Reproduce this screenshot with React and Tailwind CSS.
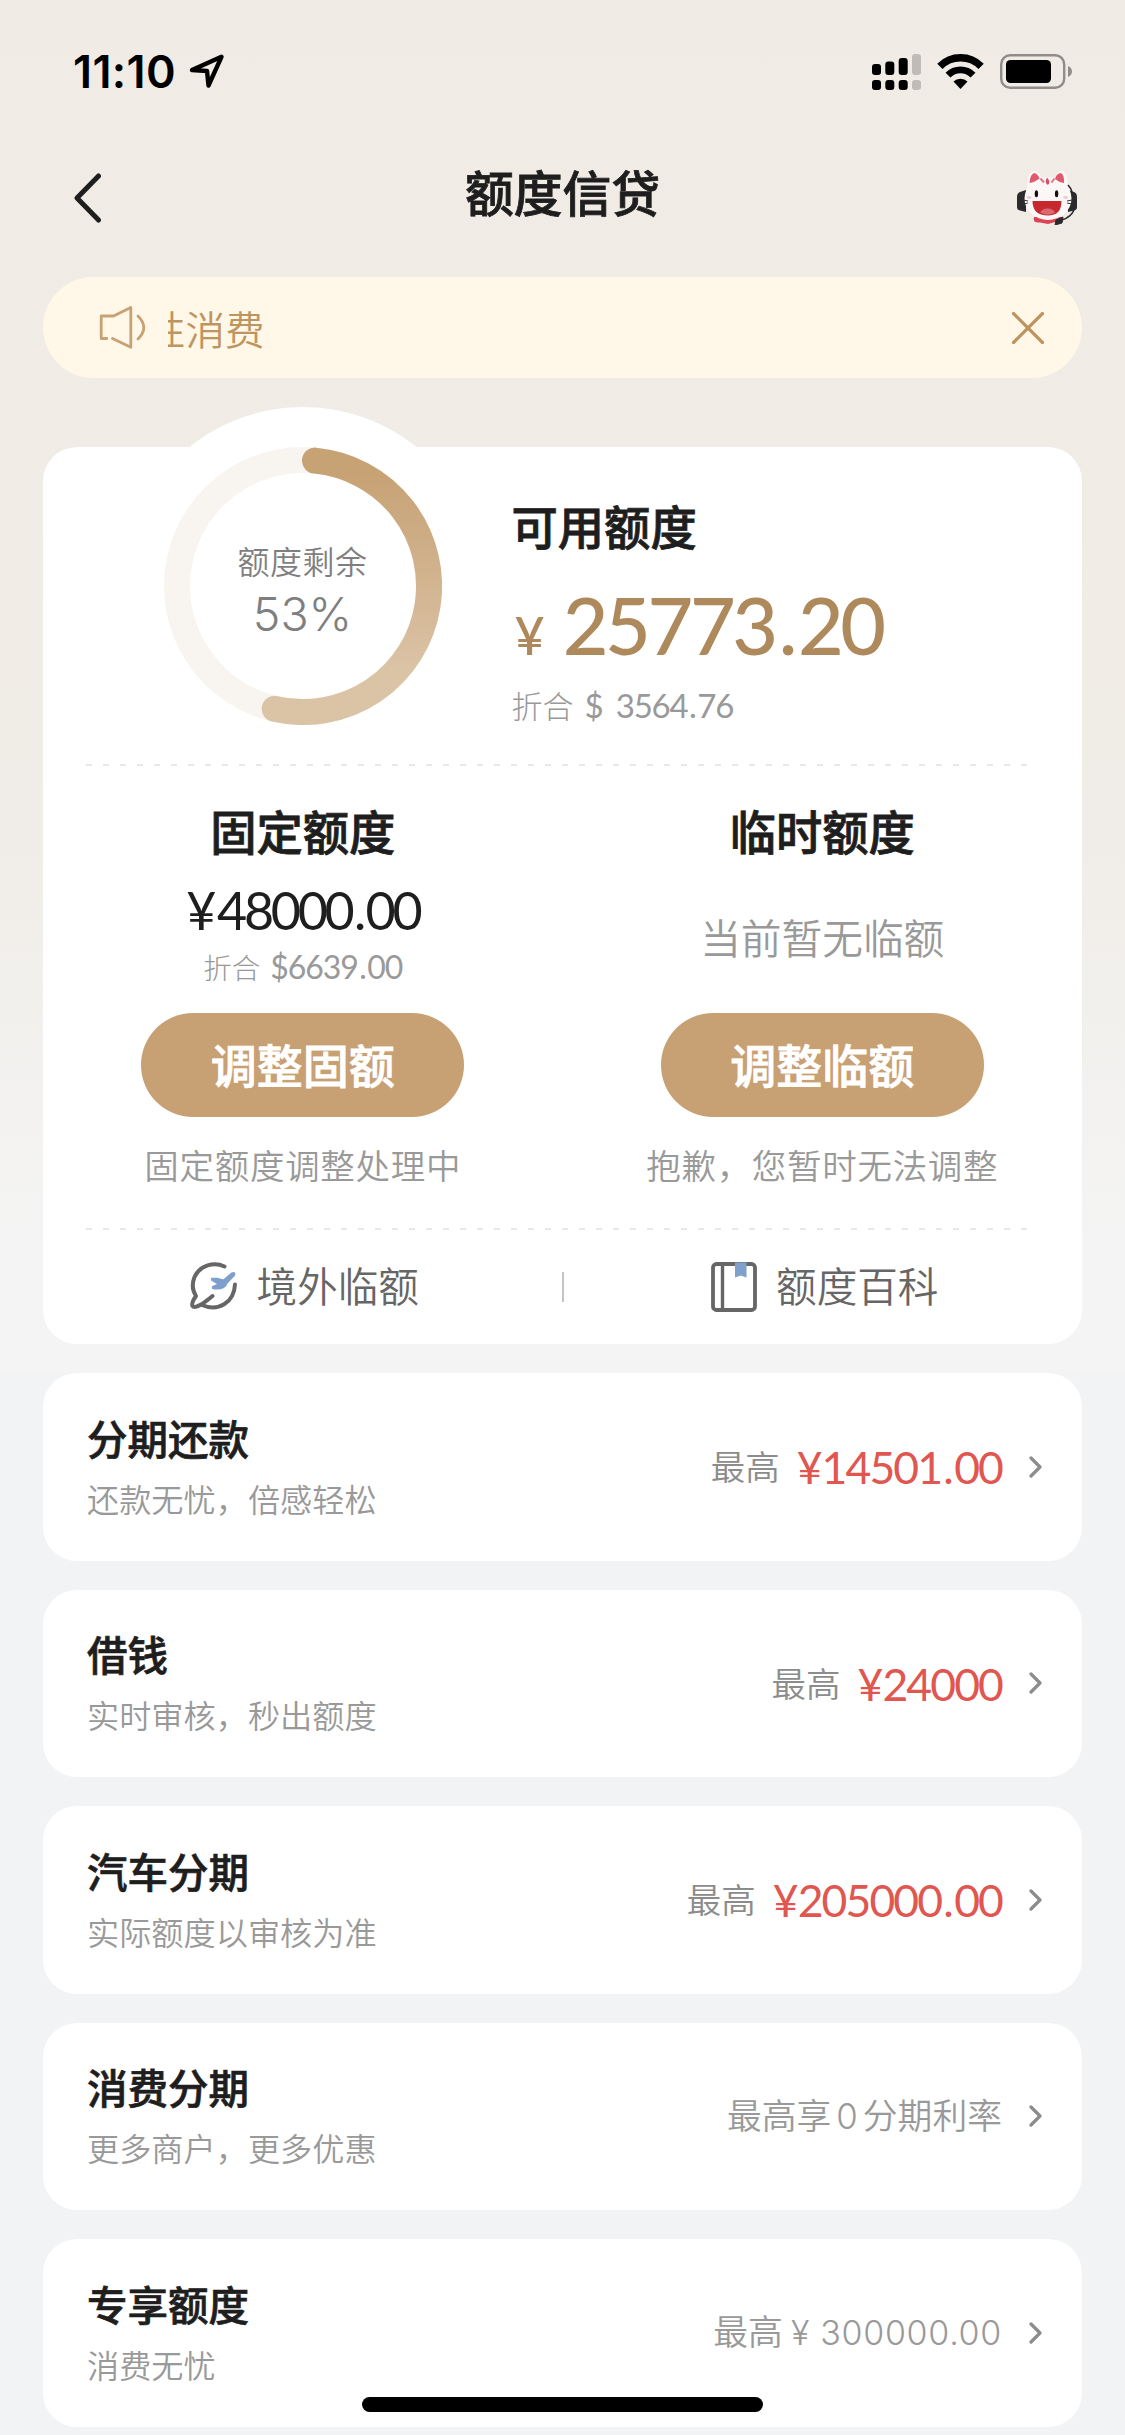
import React from "react";

const rows = [
  { title: "分期还款", sub: "还款无忧，倍感轻松", amount: "14501.00" },
  { title: "借钱", sub: "实时审核，秒出额度", amount: "24000" },
  { title: "汽车分期", sub: "实际额度以审核为准", amount: "205000.00" },
  {
    title: "消费分期",
    sub: "更多商户，更多优惠",
    note: (
      <>
        最高享<span className="mx-[5px] font-['Inter']">0</span>分期利率
      </>
    ),
  },
  {
    title: "专享额度",
    sub: "消费无忧",
    note: (
      <>
        最高<span className="ml-[8px] font-['Inter'] text-[34px] tracking-[0.7px]">¥ 300000.00</span>
      </>
    ),
  },
];

function StatusBar() {
  return (
    <div className="h-[143px] pl-[73px] pr-[52px] flex items-center justify-between">
      <div className="flex items-center gap-[13px]">
        <span className="font-['Inter'] font-semibold text-[45px] leading-none tracking-[0.4px] text-black">
          11:10
        </span>
        <svg width="36" height="35" viewBox="0 0 36 35" fill="none">
          <path
            d="M32.5 2.8 L3 16 L18 17 L19.5 31.5 Z"
            stroke="#000"
            strokeWidth="4.4"
            strokeLinejoin="round"
          />
        </svg>
      </div>

      <div className="flex items-center">
        {/* Dual SIM signal */}
        <svg width="49" height="36" viewBox="0 0 49 36">
          <rect x="0" y="10" width="9" height="11" rx="3" />
          <rect x="13.3" y="7.5" width="9" height="13.5" rx="3" />
          <rect x="26.7" y="4" width="9" height="17" rx="3" />
          <rect x="40" y="0" width="9" height="21" rx="3" fill="#bfbcb8" />
          <rect x="0" y="26" width="9" height="10" rx="3" />
          <rect x="13.3" y="26" width="9" height="10" rx="3" />
          <rect x="26.7" y="26" width="9" height="10" rx="3" />
          <rect x="40" y="26" width="9" height="10" rx="3" fill="#bfbcb8" />
        </svg>

        {/* Wifi */}
        <svg className="ml-[16px]" width="47" height="35" viewBox="0 0 47 35" fill="none">
          <path d="M2.9 12.4 A29 29 0 0 1 44.1 12.4" stroke="#000" strokeWidth="7.4" />
          <path d="M11 21.2 A17.5 17.5 0 0 1 36 21.2" stroke="#000" strokeWidth="6.8" />
          <path d="M16.5 27.6 A10 10 0 0 1 30.5 27.6 L23.5 35 Z" fill="#000" />
        </svg>

        {/* Battery */}
        <svg className="ml-[16px]" width="73" height="35" viewBox="0 0 73 35" fill="none">
          <rect x="1.2" y="1.2" width="63" height="32.6" rx="9" stroke="#8f8c89" strokeWidth="2.4" />
          <rect x="6" y="6" width="45" height="23" rx="4.5" fill="#000" />
          <path d="M68 12 C73.3 14 73.3 21 68 23 Z" fill="#8f8c89" />
        </svg>
      </div>
    </div>
  );
}

function Mascot() {
  return (
    <svg width="60" height="55" viewBox="0 0 60 55" fill="none">
      <path d="M9 20 L3 22 Q0 23 0 27 V37 Q0 40 3 40.5 L9 42 Z" fill="#2b2b2d" />
      <path d="M51 20 L57 22 Q60 23 60 27 V37 Q60 40 57 40.5 L51 42 Z" fill="#2b2b2d" />
      <path d="M17 47 H45 Q46 53 38 52 L31 54 L23 52.5 Q15 53 17 47 Z" fill="#dc4355" />
      <path d="M10 18 Q10 2 17 1 Q22 1 25 8 H37 Q40 1 45 1 Q51 2 51 18 Z" fill="#fbf7f6" />
      <ellipse cx="31" cy="28.5" rx="23.5" ry="21.5" fill="#fbf7f6" />
      <path d="M12.5 13 Q13 4 17.5 3 Q21 4 22.5 8.5 Q17 12.5 12.5 13 Z" fill="#e05a6d" />
      <path d="M47 13 Q47.5 4 43.5 3 Q39 4 38 9 Q42 12.5 47 13 Z" fill="#e05a6d" />
      <path d="M30 7.5 Q34 12 31 15 Q27 13 30 7.5 Z" fill="#dc4c5e" />
      <path d="M23.5 8.5 L27 12.5 M37.5 8.5 L34.5 12.5" stroke="#e27582" strokeWidth="2" />
      <ellipse cx="19.4" cy="23.8" rx="1.7" ry="3.5" fill="#111" />
      <ellipse cx="39.6" cy="23.8" rx="1.7" ry="3.5" fill="#111" />
      <ellipse cx="12" cy="27.5" rx="2.4" ry="1.4" fill="#f6c6ca" />
      <ellipse cx="48.5" cy="27.5" rx="2.4" ry="1.4" fill="#f6c6ca" />
      <path d="M15.5 31 H44.5 Q44.5 45.5 31 45.5 Q15.5 45.5 15.5 31 Z" fill="#c5292d" />
      <path d="M23 42.5 Q26 38 31 38.5 Q36 38.5 38 42.5 Q31 47 23 42.5 Z" fill="#d9696f" />
      <path d="M6 30 L11 31 M6 34 L11 33 M55 30 L50 31 M55 34 L50 33" stroke="#333" strokeWidth="1" />
      <path d="M51 15 Q54 18 55 22 M57 40 Q54 47 45 50" stroke="#2b2b2d" strokeWidth="1.6" />
      <path d="M39 50 L46 47 L45 53 L38 55 Z" fill="#2b2b2d" stroke="#2b2b2d" strokeLinejoin="round" />
    </svg>
  );
}

function NavBar() {
  return (
    <div className="h-[110px] mb-[24px] px-[48px] flex items-center justify-between">
      <div className="w-[87px] pl-[25px]">
        <svg width="29" height="50" viewBox="0 0 29 50" fill="none">
          <path
            d="M25.5 3 L4 25 L25.5 47"
            stroke="#1e1e1e"
            strokeWidth="5"
            strokeLinecap="round"
            strokeLinejoin="round"
          />
        </svg>
      </div>
      <h1 className="pb-[14px] text-[48.8px] leading-[50px] font-medium text-[#1e1e1e] [-webkit-text-stroke:0.8px]">
        额度信贷
      </h1>
      <div className="w-[87px] pb-[2px] flex justify-end">
        <Mascot />
      </div>
    </div>
  );
}

function Notice() {
  return (
    <div className="mx-[43px] h-[101px] rounded-full bg-[#fff7e8] pl-[56px] pr-[38px] flex items-center">
      <svg className="shrink-0" width="47" height="43" viewBox="0 0 47 43" fill="none">
        <path
          d="M7.8 32.5 H2.2 V10 H14.5 L31.8 1.5 V41.3 L13.5 32.5"
          stroke="#c7a274"
          strokeWidth="2.8"
          strokeLinecap="round"
          strokeLinejoin="round"
        />
        <path d="M39 10 Q50.5 21.5 39 33" stroke="#c7a274" strokeWidth="2.8" strokeLinecap="round" />
      </svg>
      <div className="ml-[22px] flex-1 overflow-hidden">
        <p className="-ml-[22px] text-[39.5px] leading-[60px] font-[350] text-[#be955f] whitespace-nowrap">
          性消费
        </p>
      </div>
      <svg width="32" height="32" viewBox="0 0 32 32" fill="none">
        <path d="M1.5 1.5 L30.5 30.5 M30.5 1.5 L1.5 30.5" stroke="#be955f" strokeWidth="3.2" strokeLinecap="round" />
      </svg>
    </div>
  );
}

function QuotaRing() {
  return (
    <div className="relative ml-[120.5px] w-[278px] h-[278px]">
      {/* White dome that rises above the card */}
      <div className="absolute -left-[42px] -top-[40px] w-[362px] h-[181px] rounded-t-full bg-white" />
      <svg className="relative" width="278" height="278" viewBox="0 0 278 278" fill="none">
        <defs>
          <linearGradient id="ring" gradientUnits="userSpaceOnUse" x1="139" y1="0" x2="139" y2="278">
            <stop offset="0.1" stopColor="#c7a275" />
            <stop offset="0.8" stopColor="#dbc3a6" />
          </linearGradient>
        </defs>
        <circle cx="139" cy="139" r="126" stroke="#f8f5f1" strokeWidth="26" />
        <path
          d="M151 13.6 A126 126 0 1 1 110.7 261.8"
          stroke="url(#ring)"
          strokeWidth="26"
          strokeLinecap="round"
        />
      </svg>
      <div className="absolute inset-0 pt-[2px] flex flex-col items-center justify-center text-[#7f7f7f]">
        <p className="text-[32px] leading-[54px] font-[350] tracking-[0.5px]">额度剩余</p>
        <p className="font-['Inter'] font-[350] text-[46.5px] leading-[54px]">53%</p>
      </div>
    </div>
  );
}

function DashedLine() {
  return (
    <div className="ml-[43px] w-[942px] h-[2px] bg-[repeating-linear-gradient(to_right,#e8e8e8_0px,#e8e8e8_6px,transparent_6px,transparent_17px)]" />
  );
}

// Digits with a little air around the decimal point
function Num({ value }) {
  const [whole, cents] = value.split(".");
  return (
    <>
      {whole}
      {cents && <span className="mx-[0.05em]">.</span>}
      {cents}
    </>
  );
}

function PillButton({ children }) {
  return (
    <button className="w-[323px] h-[104px] pb-[5px] rounded-full bg-[#c7a074] text-white text-[46px] font-medium leading-none [-webkit-text-stroke:0.8px]">
      {children}
    </button>
  );
}

function QuotaCard() {
  return (
    <div className="mx-[43px] mt-[69px] h-[897px] rounded-[34px] bg-white">
      <div className="h-[317px] flex">
        <QuotaRing />
        <div className="ml-[70px] pt-[48px]">
          <h2 className="text-[46.3px] leading-[60px] font-medium text-[#1e1e1e] [-webkit-text-stroke:0.8px]">
            可用额度
          </h2>
          <div className="mt-[30px] pl-[3px] flex items-baseline font-['Lato'] font-medium text-[#ae895c]">
            <span className="text-[52px] leading-none">¥</span>
            <span className="ml-[18px] text-[79px] leading-[80px] tracking-[-3.4px]">
              <Num value="25773.20" />
            </span>
          </div>
          <div className="mt-[20px] flex items-center leading-[40px] text-[#999]">
            <span className="text-[31px] font-light">折合</span>
            <span className="ml-[11px] font-['Lato'] text-[33px] tracking-[-1.2px] [word-spacing:6px]">
              $ <Num value="3564.76" />
            </span>
          </div>
        </div>
      </div>

      <DashedLine />

      <div className="h-[462px] flex">
        <div className="w-1/2 pt-[34px] flex flex-col items-center">
          <h2 className="text-[46.3px] leading-[60px] font-medium text-[#1e1e1e] [-webkit-text-stroke:0.8px]">
            固定额度
          </h2>
          <p className="mt-[23px] font-['Lato'] text-[52px] leading-[54px] tracking-[-3.3px] text-[#1e1e1e]">
            <span className="mr-[4px]">¥</span>
            <Num value="48000.00" />
          </p>
          <div className="mt-[14px] flex items-center leading-[32px] text-[#999]">
            <span className="text-[28.5px] font-light">折合</span>
            <span className="ml-[10px] font-['Lato'] text-[32px] tracking-[-1.1px]">
              $<Num value="6639.00" />
            </span>
          </div>
          <div className="mt-[30px]">
            <PillButton>调整固额</PillButton>
          </div>
          <p className="mt-[27px] text-[34.5px] leading-[40px] tracking-[0.7px] font-[350] text-[#999]">
            固定额度调整处理中
          </p>
        </div>

        <div className="w-1/2 pt-[34px] flex flex-col items-center">
          <h2 className="text-[46.3px] leading-[60px] font-medium text-[#1e1e1e] [-webkit-text-stroke:0.8px]">
            临时额度
          </h2>
          <p className="mt-[23px] h-[100px] pt-[8px] flex items-center text-[40.7px] font-[350] text-[#999]">
            当前暂无临额
          </p>
          <div className="mt-[30px]">
            <PillButton>调整临额</PillButton>
          </div>
          <p className="mt-[27px] text-[34.5px] leading-[40px] tracking-[0.7px] font-[350] text-[#999]">
            抱歉，您暂时无法调整
          </p>
        </div>
      </div>

      <DashedLine />

      <div className="h-[114px] flex items-center text-[40.6px] font-[350] text-[#666]">
        <div className="flex-1 pl-[4px] flex items-center justify-center gap-[19px]">
          <svg width="48" height="49" viewBox="0 0 48 49" fill="none">
            <path
              d="M34.5 4.5 C24 -0.5 10 3 4.5 15 C1 24 4 31 6 34 C2.5 39 1.5 42 2.5 44 C5 47 13 42 22.5 34"
              stroke="#666"
              strokeWidth="4"
              strokeLinecap="round"
              strokeLinejoin="round"
            />
            <path d="M12 43 C28 50 44 41 45 22.5" stroke="#666" strokeWidth="4" strokeLinecap="round" />
            <path
              d="M22 16.8 H27 L33.5 18.5 L42 11.3 C44 10.3 45 11.5 44 13.2 L37 20.5 C35.5 25 31 27.5 23 26.3 L22.8 25 L29 22.2 L22 18 Z"
              fill="#7f9fcc"
              stroke="#7f9fcc"
              strokeWidth="2"
              strokeLinejoin="round"
            />
          </svg>
          <span className="pb-[4px]">境外临额</span>
        </div>
        <div className="w-[2px] h-[30px] bg-[#c4c4c4]" />
        <div className="flex-1 pl-[4px] flex items-center justify-center gap-[19px]">
          <svg width="46" height="50" viewBox="0 0 46 50" fill="none">
            <rect x="2" y="2" width="42" height="46" rx="3.5" stroke="#666" strokeWidth="3.8" />
            <path d="M11.5 2 V48" stroke="#666" strokeWidth="3.4" />
            <path d="M24 0.5 H35.5 V15.5 L29.7 13.5 L24 15.5 Z" fill="#7f9fcc" />
          </svg>
          <span className="pb-[4px]">额度百科</span>
        </div>
      </div>
    </div>
  );
}

function ProductRow({ title, sub, amount, note }) {
  return (
    <div className="h-[187.5px] shrink-0 rounded-[34px] bg-white pl-[44px] pr-[40px] flex items-center justify-between">
      <div className="pb-[3px]">
        <h3 className="text-[40.5px] leading-[50px] font-medium text-[#1e1e1e] [-webkit-text-stroke:0.7px]">
          {title}
        </h3>
        <p className="mt-[15px] text-[32.2px] leading-[40px] font-[350] text-[#999]">{sub}</p>
      </div>
      <div className="flex items-center">
        {amount ? (
          <div className="flex items-center leading-[50px]">
            <span className="pb-[3px] text-[34.5px] font-[350] text-[#8c8c8c]">最高</span>
            <span className="ml-[17px] pt-px font-['Lato'] text-[44.5px] tracking-[-1.9px] text-[#df5750]">
              <span className="mr-px">¥</span>
              <Num value={amount} />
            </span>
          </div>
        ) : (
          <p className="pb-[3px] text-[34.8px] leading-[50px] font-[350] text-[#999]">{note}</p>
        )}
        <svg className="ml-[27px]" width="13" height="22" viewBox="0 0 13 22" fill="none">
          <path d="M2 2 L11 11 L2 20" stroke="#8c8c8c" strokeWidth="3.2" strokeLinecap="round" strokeLinejoin="round" />
        </svg>
      </div>
    </div>
  );
}

export default function App() {
  return (
    <div className="relative w-[1125px] h-[2435px] overflow-hidden font-['Noto_Sans_CJK_SC',sans-serif] bg-[linear-gradient(to_bottom,#f0ebe5_0px,#f0ece6_750px,#f4f4f4_1250px,#f4f4f4_1373px,#f2f3f5_1373px)]">
      <StatusBar />
      <NavBar />
      <Notice />
      <QuotaCard />
      <div className="mx-[43px] mt-[29px] flex flex-col gap-[29px]">
        {rows.map((row) => (
          <ProductRow key={row.title} {...row} />
        ))}
      </div>

      {/* Home indicator */}
      <div className="absolute left-[362px] bottom-[23px] w-[401px] h-[15px] rounded-full bg-black" />
    </div>
  );
}
